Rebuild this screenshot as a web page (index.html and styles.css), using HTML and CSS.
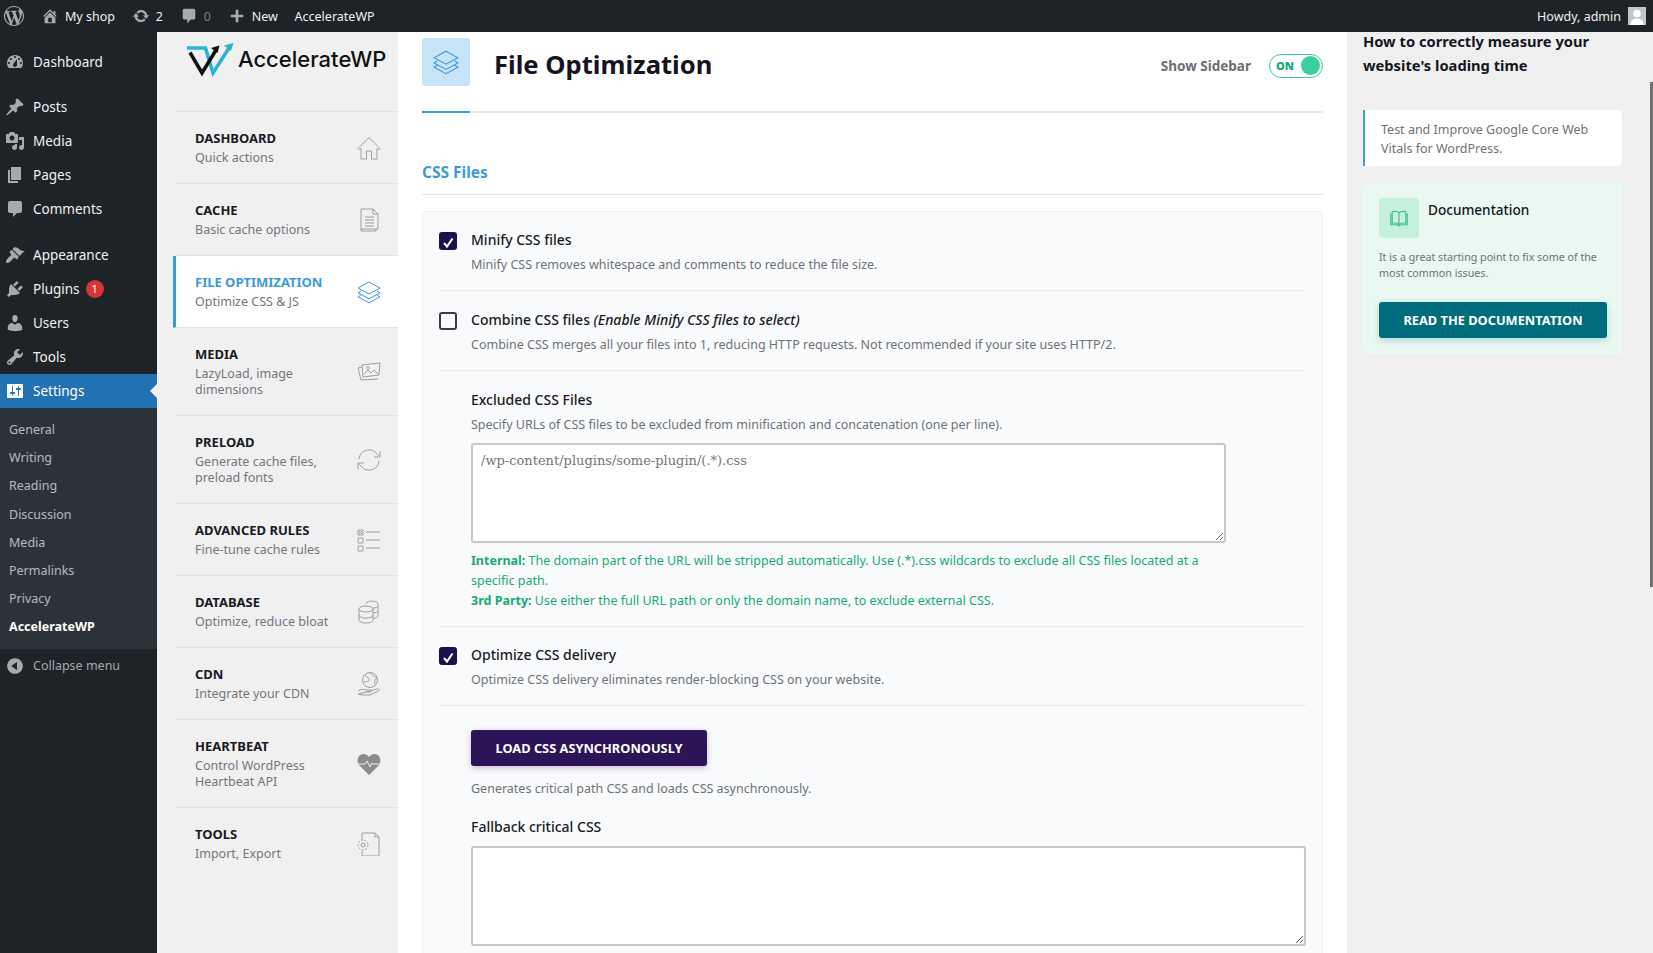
FILE: index.html
```html
<!DOCTYPE html>
<html lang="en">
<head>
<meta charset="UTF-8" />
<title>File Optimization - AccelerateWP</title>
<link rel="stylesheet" href="styles.css">
</head>
<body>
<svg class="defs" aria-hidden="true">
  <symbol id="i-wp" viewBox="0 0 20 20"><path d="M20 10c0-5.51-4.49-10-10-10C4.48 0 0 4.49 0 10c0 5.52 4.48 10 10 10 5.51 0 10-4.48 10-10zM7.78 15.37L4.37 6.22c.55-.02 1.17-.08 1.17-.08.5-.06.44-1.13-.06-1.11 0 0-1.45.11-2.37.11-.18 0-.37 0-.58-.01C4.12 2.69 6.87 1.11 10 1.11c2.33 0 4.45.87 6.05 2.34-.68-.11-1.65.39-1.65 1.58 0 .74.45 1.36.9 2.1.35.61.55 1.36.55 2.46 0 1.49-1.4 5-1.4 5l-3.03-8.37c.54-.02.82-.17.82-.17.5-.05.44-1.25-.06-1.22 0 0-1.44.12-2.38.12-.87 0-2.33-.12-2.33-.12-.5-.03-.56 1.2-.06 1.22l.92.08 1.26 3.41zM17.41 10c.24-.64.74-1.87.43-4.25.7 1.29 1.05 2.71 1.05 4.25 0 3.29-1.73 6.24-4.4 7.78.97-2.59 1.94-5.2 2.92-7.78zM6.1 18.09C3.12 16.65 1.11 13.53 1.11 10c0-1.3.23-2.48.72-3.59C3.25 10.3 4.67 14.2 6.1 18.09zm4.03-6.63l2.58 6.98c-.86.29-1.76.45-2.71.45-.79 0-1.57-.11-2.29-.33.81-2.38 1.62-4.74 2.42-7.1z"/></symbol>
  <symbol id="i-home" viewBox="0 0 20 20"><path d="M16 8.5l1.53 1.53-1.06 1.06L10 4.62l-6.47 6.47-1.06-1.06L10 2.5l4 4v-2h2v4zm-6-2.46l6 5.99V18H4v-5.97zM12 17v-5H8v5h4z"/></symbol>
  <symbol id="i-update" viewBox="0 0 20 20"><path d="M10.2 3.28c3.53 0 6.43 2.61 6.92 6h2.08l-3.5 4-3.5-4h2.32c-.45-1.97-2.21-3.45-4.32-3.45-1.45 0-2.73.71-3.54 1.78L4.95 5.66C6.23 4.2 8.11 3.28 10.2 3.28zm-.4 13.44c-3.52 0-6.43-2.61-6.92-6H.8l3.5-4c1.17 1.33 2.33 2.67 3.5 4H5.48c.45 1.97 2.21 3.45 4.32 3.45 1.45 0 2.73-.71 3.54-1.78l1.71 1.95c-1.28 1.46-3.15 2.38-5.25 2.38z"/></symbol>
  <symbol id="i-comment" viewBox="0 0 20 20"><path d="M5 2h10c1.1 0 2 .9 2 2v8c0 1.1-.9 2-2 2h-3l-4 4v-4H5c-1.1 0-2-.9-2-2V4c0-1.1.9-2 2-2z"/></symbol>
  <symbol id="i-plus" viewBox="0 0 20 20"><path d="M17 8.5v3h-5.5V17h-3v-5.5H3v-3h5.500V3h3v5.500z"/></symbol>
  <symbol id="i-dashboard" viewBox="0 0 20 20"><path d="M3.76 16h12.48c1.1-1.37 1.76-3.11 1.76-5 0-4.42-3.58-8-8-8s-8 3.58-8 8c0 1.89.66 3.63 1.76 5zM10 4c.55 0 1 .45 1 1s-.45 1-1 1-1-.45-1-1 .45-1 1-1zM6 6c.55 0 1 .45 1 1s-.45 1-1 1-1-.45-1-1 .45-1 1-1zm8 0c.55 0 1 .45 1 1s-.45 1-1 1-1-.45-1-1 .45-1 1-1zm-5.370 5.550L12 7v6c0 1.100-.9 2-2 2s-2-.9-2-2c0-.57.24-1.080.63-1.450zM4 10c.55 0 1 .45 1 1s-.45 1-1 1-1-.45-1-1 .45-1 1-1zm12 0c.55 0 1 .45 1 1s-.45 1-1 1-1-.45-1-1 .45-1 1-1z"/></symbol>
  <symbol id="i-pin" viewBox="0 0 20 20"><path d="M10.440 3.020l1.820-1.820 6.360 6.350-1.830 1.820c-1.050-.68-2.480-.57-3.410.36l-.75.75c-.92.93-1.040 2.350-.35 3.410l-1.830 1.820-2.410-2.410-2.800 2.790c-.42.42-3.380 2.710-3.800 2.290s1.860-3.390 2.280-3.810l2.790-2.790L4.100 9.360l1.830-1.820c1.050.69 2.480.57 3.400-.36l.75-.75c.93-.92 1.050-2.350.36-3.410z"/></symbol>
  <symbol id="i-media" viewBox="0 0 20 20"><path d="M13 11V4c0-.55-.45-1-1-1h-1.670L9 1H5L3.670 3H2c-.55 0-1 .45-1 1v7c0 .55.45 1 1 1h10c.55 0 1-.45 1-1zM7 4.500c1.380 0 2.500 1.120 2.500 2.500S8.380 9.500 7 9.500 4.500 8.380 4.500 7 5.620 4.500 7 4.500zM14 6h5v10.500c0 1.380-1.120 2.500-2.500 2.500S14 17.880 14 16.500s1.120-2.500 2.500-2.500c.17 0 .34.02.5.05V9h-3V6zm-4 8.050V13h2v3.500c0 1.380-1.120 2.500-2.500 2.500S7 17.880 7 16.500 8.120 14 9.500 14c.17 0 .34.02.5.05z"/></symbol>
  <symbol id="i-pages" viewBox="0 0 20 20"><path d="M6 15V2h10v13H6zm-1 1h8v2H3V5h2v11z"/></symbol>
  <symbol id="i-appearance" viewBox="0 0 20 20"><path d="M14.480 11.060L7.410 3.990l1.500-1.500c.5-.56 2.300-.47 3.510.32 1.210.8 1.430 1.280 2.910 2.100 1.180.64 2.450 1.260 4.450.85zm-.71.71L6.700 4.700 4.930 6.470c-.39.39-.39 1.020 0 1.410l1.060 1.060c.39.39.39 1.030 0 1.420-.6.6-1.430 1.150-2.210 1.940-.8.8-2.780 3.100-2.780 4.200 0 .9.6 1.500 1.500 1.500 1.100 0 3.400-1.980 4.200-2.780.79-.78 1.340-1.610 1.940-2.210.39-.39 1.030-.39 1.420 0l1.060 1.060c.39.39 1.020.39 1.410 0z"/></symbol>
  <symbol id="i-plugins" viewBox="0 0 20 20"><path d="M13.110 4.360L9.870 7.600 8 5.730l3.240-3.240c.35-.34 1.050-.2 1.560.32.52.51.66 1.210.31 1.550zm-8 1.770l.91-1.120 9.010 9.010-1.190.84c-.71.71-2.630 1.160-3.820 1.160H6.140L4.900 17.260c-.59.59-1.540.59-2.120 0-.59-.58-.59-1.530 0-2.120l1.240-1.240v-3.880c0-1.130.4-3.190 1.090-3.890zm7.260 3.970l3.240-3.240c.34-.35 1.040-.21 1.550.31.52.51.66 1.210.31 1.550l-3.240 3.250z"/></symbol>
  <symbol id="i-users" viewBox="0 0 20 20"><path d="M10 9.250c-2.270 0-2.730-3.440-2.730-3.440C7 4.020 7.820 2 9.970 2c2.160 0 2.980 2.020 2.710 3.810 0 0-.41 3.440-2.680 3.440zm0 2.570L12.720 10c2.390 0 4.520 2.330 4.520 4.530v2.490s-3.650 1.130-7.240 1.130c-3.650 0-7.240-1.130-7.240-1.130v-2.490c0-2.250 1.940-4.480 4.470-4.480z"/></symbol>
  <symbol id="i-tools" viewBox="0 0 20 20"><path d="M16.680 9.770c-1.340 1.340-3.300 1.670-4.950.99l-5.410 6.520c-.99.99-2.590.99-3.580 0s-.99-2.590 0-3.570l6.520-5.420c-.68-1.650-.35-3.610.99-4.950 1.280-1.280 3.120-1.620 4.720-1.060l-2.890 2.890 2.820 2.820 2.860-2.870c.53 1.580.18 3.390-1.080 4.670zM3.810 16.210c.4.39 1.040.39 1.430 0 .4-.4.4-1.040 0-1.430-.39-.4-1.030-.4-1.430 0-.39.39-.39 1.030 0 1.430z"/></symbol>
  <symbol id="i-settings" viewBox="0 0 20 20"><path d="M18 16V4c0-.55-.45-1-1-1H3c-.55 0-1 .45-1 1v12c0 .55.45 1 1 1h14c.55 0 1-.45 1-1zM8 11h1c.55 0 1 .45 1 1s-.45 1-1 1H8v1.500c0 .28-.22.5-.5.5s-.5-.22-.5-.5V13H6c-.55 0-1-.45-1-1s.45-1 1-1h1V5.500c0-.28.22-.5.5-.5s.5.22.5.5V11zm5-2h-1c-.55 0-1-.45-1-1s.45-1 1-1h1V5.500c0-.28.22-.5.5-.5s.5.22.5.5V7h1c.55 0 1 .45 1 1s-.45 1-1 1h-1v5.500c0 .28-.22.5-.5.5s-.5-.22-.5-.5V9z"/></symbol>
  <symbol id="i-collapse" viewBox="0 0 20 20"><path d="M10 2.160c4.330 0 7.840 3.510 7.840 7.840s-3.510 7.840-7.840 7.840S2.160 14.330 2.160 10 5.710 2.160 10 2.160zm2 11.720V6.120L6.180 9.970z"/></symbol>
  <symbol id="i-layers" viewBox="0 0 24 24"><path d="M12 2L23 8l-11 6L1 8zM4 11l-3 1.800 11 6 11-6-3-1.800M4 15l-3 1.800 11 6 11-6-3-1.800" fill="none" stroke="currentColor"/></symbol>
</svg>

<header class="adminbar">
  <div class="bar-left">
    <svg class="bar-wp"><use href="#i-wp"/></svg>
    <span class="bar-item"><svg class="bar-icon"><use href="#i-home"/></svg>My shop</span>
    <span class="bar-item"><svg class="bar-icon"><use href="#i-update"/></svg>2</span>
    <span class="bar-item bar-muted"><svg class="bar-icon"><use href="#i-comment"/></svg>0</span>
    <span class="bar-item"><svg class="bar-icon"><use href="#i-plus"/></svg>New</span>
    <span class="bar-item">AccelerateWP</span>
  </div>
  <div class="bar-right">
    Howdy, admin
    <span class="avatar"><svg viewBox="0 0 18 18"><circle cx="9" cy="6.500" r="3.800"/><path d="M2.500 18c0-5 3-6.500 6.500-6.500s6.500 1.500 6.500 6.500z"/></svg></span>
  </div>
</header>

<div class="layout">
  <nav class="wpmenu">
    <ul class="menu-group">
      <li><svg><use href="#i-dashboard"/></svg>Dashboard</li>
    </ul>
    <ul class="menu-group">
      <li><svg><use href="#i-pin"/></svg>Posts</li>
      <li><svg><use href="#i-media"/></svg>Media</li>
      <li><svg><use href="#i-pages"/></svg>Pages</li>
      <li><svg><use href="#i-comment"/></svg>Comments</li>
    </ul>
    <ul class="menu-group">
      <li><svg><use href="#i-appearance"/></svg>Appearance</li>
      <li><svg><use href="#i-plugins"/></svg>Plugins <span class="badge">1</span></li>
      <li><svg><use href="#i-users"/></svg>Users</li>
      <li><svg><use href="#i-tools"/></svg>Tools</li>
      <li class="current"><svg><use href="#i-settings"/></svg>Settings</li>
    </ul>
    <ul class="submenu">
      <li>General</li>
      <li>Writing</li>
      <li>Reading</li>
      <li>Discussion</li>
      <li>Media</li>
      <li>Permalinks</li>
      <li>Privacy</li>
      <li class="on">AccelerateWP</li>
    </ul>
    <div class="collapse"><svg><use href="#i-collapse"/></svg>Collapse menu</div>
  </nav>

  <aside class="pluginnav">
    <div class="logo">
      <svg class="logo-mark" viewBox="0 0 48 34">
        <path d="M1 5H19.500L27 30 43 5" fill="none" stroke="#27b5d3" stroke-width="3.500"/>
        <path d="M47.500 0l-9.500 2.500 7 5.500z" fill="#27b5d3"/>
        <path d="M4 9.500L16 30 30 7" fill="none" stroke="#111" stroke-width="3.500"/>
        <path d="M33.500 2.500l-8.500 2.500 6.500 5z" fill="#111"/>
      </svg>
      <span class="logo-text">AccelerateWP</span>
    </div>
    <a class="navitem">
      <div><h4>Dashboard</h4><p>Quick actions</p></div>
      <svg class="navicon" viewBox="0 0 24 24"><path d="M12 1.500L1 12.500l1.500 1.500L4 12.500V23h5.500v-8h5v8H20V12.500l1.500 1.500 1.500-1.500z"/></svg>
    </a>
    <a class="navitem">
      <div><h4>Cache</h4><p>Basic cache options</p></div>
      <svg class="navicon" viewBox="0 0 24 24"><path d="M4 1h12l5 5v15H4zM16 1v5h5M8 9h9M8 12h9M8 15h9M8 18h9M4 21v2h15v-2"/></svg>
    </a>
    <a class="navitem active">
      <div><h4>File Optimization</h4><p>Optimize CSS &amp; JS</p></div>
      <svg class="navicon"><use href="#i-layers"/></svg>
    </a>
    <a class="navitem">
      <div><h4>Media</h4><p>LazyLoad, image<br>dimensions</p></div>
      <svg class="navicon" viewBox="0 0 24 24"><path d="M5 7L1 8l3 12 17-1M5 5l18-2-1 12-16 2zM7 14l4-4 3 3 3-3 4 4M11 6.500a1.500 1.500 0 1 0 .01 0"/></svg>
    </a>
    <a class="navitem">
      <div><h4>Preload</h4><p>Generate cache files,<br>preload fonts</p></div>
      <svg class="navicon" viewBox="0 0 24 24"><path d="M2 11a10 10 0 0 1 18-5l2 2M23 3v6h-6M22 13a10 10 0 0 1-18 5l-2-2M1 21v-6h6"/></svg>
    </a>
    <a class="navitem">
      <div><h4>Advanced Rules</h4><p>Fine-tune cache rules</p></div>
      <svg class="navicon" viewBox="0 0 24 24"><path d="M1 2h5v5H1zM1 10h5v5H1zM1 18h5v5H1zM9 4h14M9 12h14M9 20h14M2 3l3 3M5 3l-3 3"/></svg>
    </a>
    <a class="navitem">
      <div><h4>Database</h4><p>Optimize, reduce bloat</p></div>
      <svg class="navicon" viewBox="0 0 24 24"><ellipse cx="9" cy="9" rx="7" ry="3"/><path d="M2 9v11c0 1.700 3 3 7 3s7-1.300 7-3V9M2 15c0 1.700 3 3 7 3s7-1.300 7-3M9 4c0-1.700 3-3 6-3s6 1.300 6 3v12c0 1-1.500 2-5 2.500M16 8c3 0 5-1 5-2M16 13c3 0 5-1 5-2"/></svg>
    </a>
    <a class="navitem">
      <div><h4>CDN</h4><p>Integrate your CDN</p></div>
      <svg class="navicon" viewBox="0 0 24 24"><circle cx="13" cy="8" r="7.500"/><path d="M8 3c1 3 5 2 4 5s-3 1-5 2M14 1c0 3 4 3 6 5-2 1-3 3-2 6M1 19c3-2 6-2 8-1h4c2 0 2 2 0 2H9M13 19l7-2c2-.5 3 1 1.500 2L13 23H5l-4-1z"/></svg>
    </a>
    <a class="navitem">
      <div><h4>Heartbeat</h4><p>Control WordPress<br>Heartbeat API</p></div>
      <svg class="navicon solid" viewBox="0 0 24 24"><path d="M12 23L2 13C-1 9 1 2 6.500 2 9 2 11 3.500 12 5c1-1.500 3-3 5.500-3C23 2 25 9 22 13z"/><path d="M1 12h7l2-3 3 6 2-4 1 1h7" fill="none" stroke="#f0f0f1" stroke-width="1"/></svg>
    </a>
    <a class="navitem">
      <div><h4>Tools</h4><p>Import, Export</p></div>
      <svg class="navicon" viewBox="0 0 24 24"><path d="M5 8V1h13l4 4v19H5v-5M18 1v4h4"/><circle cx="6" cy="13" r="2"/><circle cx="6" cy="13" r="5" stroke-dasharray="2 1.500"/></svg>
    </a>
  </aside>

  <main class="content">
    <div class="head">
      <div class="head-icon"><svg><use href="#i-layers"/></svg></div>
      <h1>File Optimization</h1>
      <div class="head-toggle">
        <span>Show Sidebar</span>
        <span class="switch"><b>ON</b><i></i></span>
      </div>
    </div>
    <div class="head-line"><span></span></div>

    <h2>CSS Files</h2>
    <section class="card">
      <div class="field">
        <span class="check on"><svg viewBox="0 0 18 18"><path d="M5 11l3 3.500 5.500-8"/></svg></span>
        <div>
          <div class="label">Minify CSS files</div>
          <div class="desc">Minify CSS removes whitespace and comments to reduce the file size.</div>
        </div>
      </div>
      <div class="field">
        <span class="check"></span>
        <div>
          <div class="label">Combine CSS files <em>(Enable Minify CSS files to select)</em></div>
          <div class="desc">Combine CSS merges all your files into 1, reducing HTTP requests. Not recommended if your site uses HTTP/2.</div>
        </div>
      </div>
      <div class="field sub">
        <div class="label">Excluded CSS Files</div>
        <div class="desc">Specify URLs of CSS files to be excluded from minification and concatenation (one per line).</div>
        <textarea class="box box-short" placeholder="/wp-content/plugins/some-plugin/(.*).css"></textarea>
        <div class="help">
          <b>Internal:</b> The domain part of the URL will be stripped automatically. Use (.*).css wildcards to exclude all CSS files located at a specific path.<br>
          <b>3rd Party:</b> Use either the full URL path or only the domain name, to exclude external CSS.
        </div>
      </div>
      <div class="field">
        <span class="check on"><svg viewBox="0 0 18 18"><path d="M5 11l3 3.500 5.500-8"/></svg></span>
        <div>
          <div class="label">Optimize CSS delivery</div>
          <div class="desc">Optimize CSS delivery eliminates render-blocking CSS on your website.</div>
        </div>
      </div>
      <div class="field sub last">
        <button class="btn-async">LOAD CSS ASYNCHRONOUSLY</button>
        <div class="desc under-btn">Generates critical path CSS and loads CSS asynchronously.</div>
        <div class="label fallback">Fallback critical CSS</div>
        <textarea class="box box-wide"></textarea>
      </div>
    </section>
  </main>

  <aside class="sidebar">
    <h3>How to correctly measure your website's loading time</h3>
    <div class="tip">Test and Improve Google Core Web Vitals for WordPress.</div>
    <div class="doc">
      <div class="doc-top">
        <div class="doc-icon">
          <svg viewBox="0 0 24 24"><path d="M12 5C10 3 6 3 3 3.500V19c3-.5 7-.5 9 1.500 2-2 6-2 9-1.500V3.500C18 3 14 3 12 5zM12 5v15M1 6v15h8l3 1.500L15 21h8V6"/></svg>
        </div>
        <div class="doc-title">Documentation</div>
      </div>
      <p>It is a great starting point to fix some of the most common issues.</p>
      <button class="btn-doc">READ THE DOCUMENTATION</button>
    </div>
  </aside>
</div>
<div class="scrollthumb"></div>
</body>
</html>
```

FILE: styles.css
```css
/* Base */
* {
  box-sizing: border-box;
}
html, body {
  height: 100%;
  margin: 0;
  overflow: hidden;
}
body {
  font-family: "Noto Sans", "Open Sans", sans-serif;
  font-size: 13px;
  color: #1a1a24;
  background: #fff;
  display: flex;
  flex-direction: column;
}
ul {
  list-style: none;
  margin: 0;
  padding: 0;
}
.defs {
  display: none;
}

/* Admin bar */
.adminbar {
  height: 32px;
  flex: none;
  background: #1d2327;
  color: #f0f0f1;
  display: flex;
  justify-content: space-between;
  align-items: center;
  font-size: 12.5px;
  padding: 0 7px 0 4px;
}
.bar-left, .bar-right, .bar-item {
  display: flex;
  align-items: center;
}
.bar-wp {
  width: 20px;
  height: 20px;
  fill: #a7aaad;
  margin-right: 17px;
}
.bar-item {
  margin-right: 16.800px;
}
.bar-icon {
  width: 18px;
  height: 18px;
  fill: #a7aaad;
  margin-right: 6px;
}
.bar-muted {
  color: #7b8187;
}
.bar-right {
  gap: 7px;
}
.avatar {
  width: 18px;
  height: 18px;
  background: #c4c5c7;
  display: block;
}
.avatar svg {
  display: block;
  fill: #fff;
}

/* Layout */
.layout {
  flex: 1;
  display: flex;
  min-height: 0;
}

/* WordPress menu */
.wpmenu {
  width: 157px;
  flex: none;
  background: #1d2327;
  color: #f0f0f1;
  font-size: 13.500px;
  padding-top: 13px;
}
.menu-group {
  margin-bottom: 12px;
}
.menu-group:first-child {
  margin-bottom: 11px;
}
.menu-group:nth-child(3) {
  margin-bottom: 0;
}
.menu-group li, .collapse {
  height: 34px;
  display: flex;
  align-items: center;
  padding-left: 5px;
  position: relative;
}
.menu-group svg, .collapse svg {
  width: 20px;
  height: 20px;
  fill: #a7aaad;
  margin-right: 8px;
  flex: none;
}
.menu-group .current {
  background: #2271b1;
  color: #fff;
}
.menu-group .current svg {
  fill: #fff;
}
.menu-group .current::after {
  content: "";
  position: absolute;
  right: 0;
  top: 10px;
  border: 7px solid transparent;
  border-right-color: #f0f0f1;
  border-left-width: 0;
}
.badge {
  width: 18px;
  height: 18px;
  border-radius: 50%;
  background: #d63638;
  color: #fff;
  font-size: 11px;
  line-height: 18px;
  text-align: center;
  margin-left: 6px;
}
.submenu {
  background: #2c3338;
  padding: 8px 0 7px;
  font-size: 12.500px;
  color: rgba(240, 246, 252, 0.7);
}
.submenu li {
  height: 28.200px;
  line-height: 28px;
  padding-left: 9px;
}
.submenu .on {
  color: #fff;
  font-weight: 700;
}
.collapse {
  font-size: 12.500px;
  color: #a7aaad;
}

/* Plugin nav */
.pluginnav {
  width: 241px;
  flex: none;
  background: #f0f0f1;
  padding-left: 16px;
}
.logo {
  height: 80px;
  margin-left: 3px;
  border-bottom: 1px solid #e2e3e5;
  display: flex;
  align-items: flex-start;
  padding: 11px 0 0 10px;
}
.logo-mark {
  width: 48px;
  height: 34px;
  flex: none;
}
.logo-text {
  font-family: "Inter", sans-serif;
  font-size: 22px;
  font-weight: 500;
  color: #111;
  margin: 3px 0 0 4px;
}
.navitem {
  display: flex;
  justify-content: space-between;
  align-items: center;
  margin-left: 3px;
  padding: 17px 17px 17px 19px;
  border-bottom: 1px solid #e2e3e5;
}
.navitem h4 {
  margin: 0 0 2px;
  font-size: 13px;
  line-height: 19px;
  font-weight: 700;
  text-transform: uppercase;
  color: #1a1a24;
}
.navitem p {
  margin: 0;
  font-size: 12.500px;
  line-height: 16px;
  color: #72777c;
}
.navicon {
  width: 24px;
  height: 24px;
  flex: none;
  fill: none;
  stroke: #9c9ea1;
  stroke-width: 1;
}
.navicon.solid {
  fill: #8a8c8f;
  stroke: none;
}
.navitem:last-child {
  border-bottom: 0;
}
.navitem.active {
  margin-left: 0;
  background: #fff;
  border-left: 3px solid #3d9ad9;
}
.navitem.active h4 {
  color: #3d9ad9;
}
.navitem.active .navicon {
  color: #3d9ad9;
  stroke: none;
}

/* Main column */
.content {
  flex: 1;
  min-width: 0;
  padding: 6px 24px 0;
  background: #fff;
}
.head {
  display: flex;
  align-items: center;
  height: 48px;
}
.head-icon {
  width: 48px;
  height: 48px;
  background: #c6e3f8;
  border-radius: 3px;
  color: #3d9ad9;
  display: flex;
  align-items: center;
  justify-content: center;
}
.head-icon svg {
  width: 26px;
  height: 26px;
}
.head h1 {
  margin: 4px 0 0 24px;
  font-size: 25.600px;
  font-weight: 700;
  color: #15151f;
}
.head-toggle {
  margin: 7px 0 0 auto;
  display: flex;
  align-items: center;
  gap: 18px;
  font-size: 13.500px;
  font-weight: 700;
  color: #6b6e73;
}
.switch {
  width: 54px;
  height: 24px;
  border: 1px solid #3ccf9c;
  border-radius: 12px;
  display: flex;
  align-items: center;
  justify-content: space-between;
  padding: 0 2px 0 6px;
}
.switch b {
  font-size: 11px;
  color: #17ab78;
}
.switch i {
  width: 19px;
  height: 19px;
  border-radius: 50%;
  background: #3ccf9c;
}
.head-line {
  height: 2px;
  background: #e8e8ea;
  margin-top: 25px;
}
.head-line span {
  display: block;
  width: 48px;
  height: 2px;
  background: #3d9ad9;
}
.content h2 {
  margin: 47px 0 0;
  padding-bottom: 10px;
  font-size: 15.500px;
  line-height: 24px;
  font-weight: 700;
  color: #3d9ad9;
  border-bottom: 1px solid #e4e4e6;
}
.card {
  margin-top: 16px;
  padding: 0 16px;
  width: 901px;
  height: 800px;
  background: #f9fafc;
  border: 1px solid #eeeff1;
  border-radius: 3px;
}
.field {
  display: flex;
  gap: 14px;
  padding: 19px 0 15px;
  border-bottom: 1px solid #e8e9eb;
}
.field:first-child {
  padding-top: 18px;
}
.field.sub + .field {
  padding-top: 18px;
}
.check {
  width: 18px;
  height: 18px;
  flex: none;
  margin-top: 2px;
  border: 2px solid #3c3c46;
  border-radius: 3px;
}
.check.on {
  background: #1f0f4b;
  border-color: #1f0f4b;
}
.check svg {
  display: block;
  width: 18px;
  height: 18px;
  margin: -2px;
  fill: none;
  stroke: #fff;
  stroke-width: 2;
}
.label {
  font-size: 14px;
  line-height: 20px;
  font-weight: 500;
  color: #1a1a24;
}
.desc {
  margin-top: 5px;
  font-size: 12.500px;
  line-height: 20px;
  color: #6f7276;
}
.field.sub {
  display: block;
  padding-left: 32px;
}
.field.last {
  border-bottom: 0;
  padding-top: 24px;
}
.box {
  display: block;
  height: 100px;
  margin-top: 8px;
  padding: 8px;
  background: #fff;
  border: 2px solid #c6c7c9;
  border-radius: 3px;
  font-family: "DejaVu Serif", serif;
  font-size: 13px;
}
.box::placeholder {
  color: #757575;
}
.box-short {
  width: 755px;
}
.box-wide {
  width: 835px;
}
.help {
  margin-top: 8px;
  width: 730px;
  font-size: 12.500px;
  line-height: 20px;
  color: #17ab78;
}
.btn-async {
  display: block;
  width: 236px;
  height: 36px;
  border: 0;
  border-radius: 3px;
  background: #2c1458;
  color: #fff;
  font-family: inherit;
  font-size: 12.800px;
  font-weight: 700;
  box-shadow: 0 2px 6px rgba(44, 20, 88, 0.25);
}
.under-btn {
  margin-top: 13px;
}
.fallback {
  margin-top: 18px;
}
.fallback + .box {
  margin-top: 9px;
}

/* Right sidebar */
.sidebar {
  width: 306px;
  flex: none;
  background: #efefef;
  padding: 0 31px 0 16px;
}
.sidebar h3 {
  margin: -3px 0 0;
  font-size: 14.700px;
  line-height: 24px;
  font-weight: 700;
  color: #15151f;
}
.tip {
  margin-top: 33px;
  height: 56px;
  padding: 10px 16px;
  background: #fff;
  border-left: 2px solid #37a6b6;
  border-radius: 0 3px 3px 0;
  font-size: 12.500px;
  line-height: 19px;
  color: #6f7276;
}
.doc {
  margin-top: 18px;
  height: 170px;
  padding: 14px 16px;
  background: #e9f8f1;
  border-radius: 4px;
}
.doc-top {
  display: flex;
  gap: 9px;
}
.doc-icon {
  width: 40px;
  height: 40px;
  background: #c5f0dc;
  border-radius: 3px;
  display: flex;
  align-items: center;
  justify-content: center;
}
.doc-icon svg {
  width: 18px;
  height: 18px;
  fill: none;
  stroke: #3ac091;
  stroke-width: 1.500;
}
.doc-title {
  font-size: 13.600px;
  line-height: 24px;
  font-weight: 500;
  color: #15151f;
}
.doc p {
  margin: 11px 0 0;
  font-size: 10.700px;
  line-height: 16px;
  color: #6f7276;
}
.btn-doc {
  display: block;
  width: 228px;
  height: 36px;
  margin-top: 21px;
  border: 0;
  border-radius: 3px;
  background: #006d7c;
  color: #fff;
  font-family: inherit;
  font-size: 12.800px;
  font-weight: 700;
  box-shadow: 0 2px 6px rgba(0, 109, 124, 0.25);
}
.scrollthumb {
  position: absolute;
  right: 0;
  top: 82px;
  bottom: 366px;
  width: 3px;
  background: #6f6f6f;
}
```
